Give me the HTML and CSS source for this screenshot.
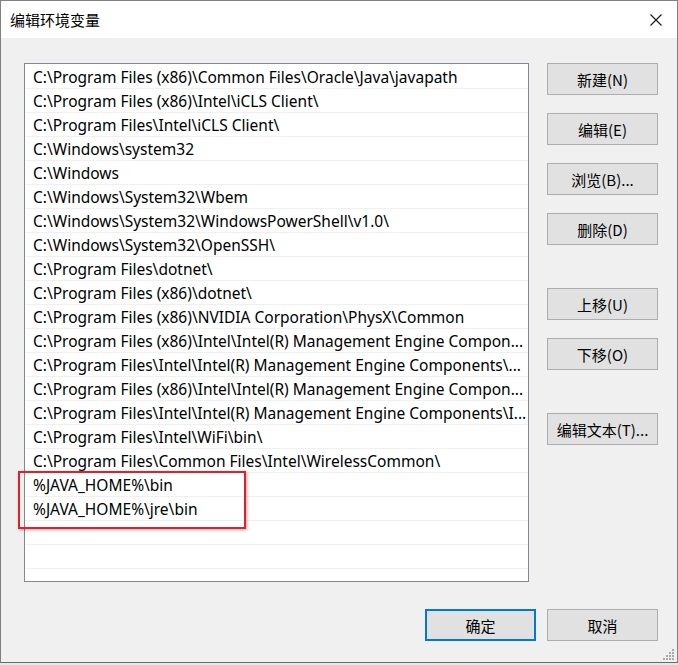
FILE: index.html
```html
<!doctype html>
<html lang="zh-CN">
<head>
	<meta charset="UTF-8">
	<title>编辑环境变量</title>
	<link rel="stylesheet" href="styles.css">
</head>
<body>
<div class="window">
	<div class="titlebar">
		<span class="title">编辑环境变量</span>
		<a href="javascript:;" class="close">
			<svg width="12" height="12" viewBox="0 0 12 12"><path d="M0.5 0.5L11.5 11.5M11.5 0.5L0.5 11.5" stroke="#1a1a1a" stroke-width="1.1" fill="none"/></svg>
		</a>
	</div>
	<div class="content">
		<div class="main">
			<div class="listBox">
				<ul class="list">
					<li>C:\Program Files (x86)\Common Files\Oracle\Java\javapath</li>
					<li>C:\Program Files (x86)\Intel\iCLS Client\</li>
					<li>C:\Program Files\Intel\iCLS Client\</li>
					<li>C:\Windows\system32</li>
					<li>C:\Windows</li>
					<li>C:\Windows\System32\Wbem</li>
					<li>C:\Windows\System32\WindowsPowerShell\v1.0\</li>
					<li>C:\Windows\System32\OpenSSH\</li>
					<li>C:\Program Files\dotnet\</li>
					<li>C:\Program Files (x86)\dotnet\</li>
					<li>C:\Program Files (x86)\NVIDIA Corporation\PhysX\Common</li>
					<li>C:\Program Files (x86)\Intel\Intel(R) Management Engine Compon...</li>
					<li>C:\Program Files\Intel\Intel(R) Management Engine Components\...</li>
					<li>C:\Program Files (x86)\Intel\Intel(R) Management Engine Compon...</li>
					<li>C:\Program Files\Intel\Intel(R) Management Engine Components\I...</li>
					<li>C:\Program Files\Intel\WiFi\bin\</li>
					<li>C:\Program Files\Common Files\Intel\WirelessCommon\</li>
					<li>%JAVA_HOME%\bin</li>
					<li>%JAVA_HOME%\jre\bin</li>
					<li></li>
					<li></li>
					<li></li>
				</ul>
				<div class="mark"></div>
			</div>
			<div class="side">
				<a href="javascript:;" class="btn">新建(N)</a>
				<a href="javascript:;" class="btn">编辑(E)</a>
				<a href="javascript:;" class="btn">浏览(B)...</a>
				<a href="javascript:;" class="btn">删除(D)</a>
				<a href="javascript:;" class="btn gapBig">上移(U)</a>
				<a href="javascript:;" class="btn">下移(O)</a>
				<a href="javascript:;" class="btn gapMid">编辑文本(T)...</a>
			</div>
		</div>
		<div class="footer">
			<a href="javascript:;" class="btn default">确定</a>
			<a href="javascript:;" class="btn">取消</a>
		</div>
		<svg class="grip" width="12" height="12" viewBox="0 0 12 12" fill="#a8a8a8">
			<rect x="9" y="1" width="2" height="2"/>
			<rect x="6" y="4" width="2" height="2"/><rect x="9" y="4" width="2" height="2"/>
			<rect x="3" y="7" width="2" height="2"/><rect x="6" y="7" width="2" height="2"/><rect x="9" y="7" width="2" height="2"/>
			<rect x="0" y="10" width="2" height="2"/><rect x="3" y="10" width="2" height="2"/><rect x="6" y="10" width="2" height="2"/><rect x="9" y="10" width="2" height="2"/>
		</svg>
	</div>
</div>
</body>
</html>
```

FILE: styles.css
```css
*{margin:0; padding:0; box-sizing:border-box;}
li{list-style:none;}
a{text-decoration:none; color:inherit;}

body{
	background:#e8e8e8;
	font-family:"Noto Sans","Noto Sans CJK SC",sans-serif;
	font-size:15px;
	color:#000;
	overflow:hidden;
}

.window{
	width:678px;
	height:663px;
	border:1px solid #808080;
	border-bottom-color:#6a6a6a;
	background:#f0f0f0;
	display:flex;
	flex-direction:column;
}
.titlebar{
	height:37px;
	background:#fff;
	display:flex;
	align-items:center;
	justify-content:space-between;
	padding:0 15px 0 9px;
}
.title{
	font-family:"Noto Sans CJK SC",sans-serif;
	font-size:15px;
	color:#000;
}
.close{display:flex; margin-top:1px;}

.content{
	flex:1;
	position:relative;
	padding:25px 19px 0 23px;
}
.main{
	display:flex;
	align-items:flex-start;
}
.listBox{
	position:relative;
	width:505px;
	height:519px;
	border:1px solid #828790;
	background:#fff;
	flex-shrink:0;
}
.list li{
	height:24px;
	line-height:24px;
	border-bottom:1px solid #f0f0f0;
	padding:0 4px 0 8px;
	font-size:15.5px;
	white-space:nowrap;
	overflow:hidden;
}
.list li:first-child{margin-top:1px;}

/* 红框标注 */
.mark{
	position:absolute;
	left:-7px;
	top:407px;
	width:228px;
	height:58px;
	border:2px solid #e0202a;
	box-shadow:1px 1px 3px rgba(0,0,0,0.35);
}

.side{
	margin-left:18px;
	width:111px;
	display:flex;
	flex-direction:column;
	gap:18px;
}
.btn{
	display:flex;
	align-items:center;
	justify-content:center;
	width:111px;
	height:32px;
	background:#e1e1e1;
	border:1px solid #adadad;
	font-family:"Noto Sans CJK SC",sans-serif;
	font-size:15px;
	color:#000;
}
.side .gapBig{margin-top:25px;}
.side .gapMid{margin-top:25px;}

.footer{
	display:flex;
	justify-content:flex-end;
	gap:11px;
	margin-top:27px;
}
.btn.default{border:2px solid #0078d7;}

.grip{
	position:absolute;
	right:2px;
	bottom:2px;
}
```
